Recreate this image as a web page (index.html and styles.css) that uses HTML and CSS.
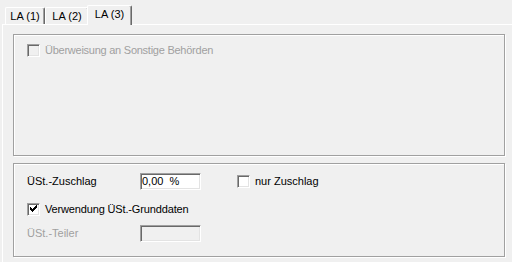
FILE: index.html
```html
<!DOCTYPE html>
<html>
<head>
<meta charset="utf-8">
<link rel="stylesheet" href="styles.css">
</head>
<body>
<div class="window">
  <div class="tabs">
    <div class="tab t1">LA (1)</div>
    <div class="tab t2">LA (2)</div>
    <div class="tab active">LA (3)</div>
  </div>
  <div class="panel">
    <div class="group g1">
      <div class="check disabled"><span class="box"></span><span class="txt tight">Überweisung an Sonstige Behörden</span></div>
    </div>
    <div class="group g2">
      <div class="row r1">
        <span class="lbl">ÜSt.-Zuschlag</span>
        <span class="field">0,00&nbsp;&nbsp;%</span>
        <div class="check nur"><span class="box"></span><span class="txt">nur Zuschlag</span></div>
      </div>
      <div class="row r2">
        <div class="check"><span class="box"><svg width="9" height="9" viewBox="0 0 9 9" shape-rendering="crispEdges"><rect x="1" y="2" width="1" height="3"/><rect x="2" y="3" width="1" height="3"/><rect x="3" y="4" width="1" height="3"/><rect x="4" y="3" width="1" height="3"/><rect x="5" y="2" width="1" height="3"/><rect x="6" y="1" width="1" height="3"/><rect x="7" y="0" width="1" height="3"/></svg></span><span class="txt semi">Verwendung ÜSt.-Grunddaten</span></div>
      </div>
      <div class="row r3">
        <span class="lbl disabled">ÜSt.-Teiler</span>
        <span class="field off"></span>
      </div>
    </div>
  </div>
</div>
</body>
</html>
```
FILE: styles.css
```css
* { box-sizing: border-box; }
html, body { margin: 0; padding: 0; }
body {
  width: 512px;
  height: 262px;
  overflow: hidden;
  background: #f0f0f0;
  font-family: "Liberation Sans", Arial, sans-serif;
  font-size: 11px;
  line-height: 13px;
  color: #000;
}
.window { height: 262px; display: flex; flex-direction: column; }
.tabs {
  display: flex;
  align-items: flex-end;
  height: 24px;
  padding-left: 5px;
  position: relative;
  z-index: 1;
}
.tab {
  height: 17px;
  padding-top: 2px;
  text-align: center;
  border-left: 1px solid #fff;
  border-top: 1px solid #fff;
  border-right: 1px solid #696969;
  box-shadow: inset -1px 0 0 #a0a0a0;
  border-radius: 2px 2px 0 0;
  background: #f0f0f0;
}
.t1 { width: 40px; }
.t2 { width: 44px; }
.tab.active {
  width: 45px;
  height: 20px;
  margin-left: -2px;
  margin-bottom: -1px;
  position: relative;
  z-index: 2;
}
.panel {
  flex: 1;
  margin-left: 2px;
  border-left: 1px solid #fff;
  border-top: 1px solid #fff;
  padding: 9px 7px 0 10px;
}
.group {
  border: 1px solid #a0a0a0;
  box-shadow: inset 1px 1px 0 #fff, 1px 1px 0 #fff;
  padding-left: 13px;
}
.g1 { height: 122px; padding-top: 9px; }
.g2 { height: 94px; margin-top: 7px; padding-top: 9px; }
.row { display: flex; align-items: center; }
.r1 { height: 17px; }
.r2 { margin-top: 13px; height: 13px; }
.r3 { margin-top: 9px; height: 17px; }
.lbl { width: 113px; }
.disabled { color: #a0a0a0; }
.field {
  width: 61px;
  height: 17px;
  padding-left: 1px;
  border-top: 1px solid #a0a0a0;
  border-left: 1px solid #a0a0a0;
  border-bottom: 1px solid #fff;
  border-right: 1px solid #fff;
  box-shadow: inset 1px 1px 0 #696969, inset -1px -1px 0 #e3e3e3;
  background: #fff;
  white-space: pre;
  padding-top: 1px;
}
.field.off { background: #f0f0f0; }
.check { display: flex; align-items: center; }
.box {
  width: 13px;
  height: 13px;
  flex: none;
  border-top: 1px solid #a0a0a0;
  border-left: 1px solid #a0a0a0;
  border-bottom: 1px solid #fff;
  border-right: 1px solid #fff;
  box-shadow: inset 1px 1px 0 #696969, inset -1px -1px 0 #e3e3e3;
  background: #fff;
  padding: 1px;
  display: flex;
}
.box svg { display: block; fill: #000; }
.check.disabled .box { background: #f0f0f0; }
.txt { margin-left: 5px; }
.tight { letter-spacing: -0.25px; }
.semi { letter-spacing: -0.15px; }
.nur { margin-left: 36px; }
```
